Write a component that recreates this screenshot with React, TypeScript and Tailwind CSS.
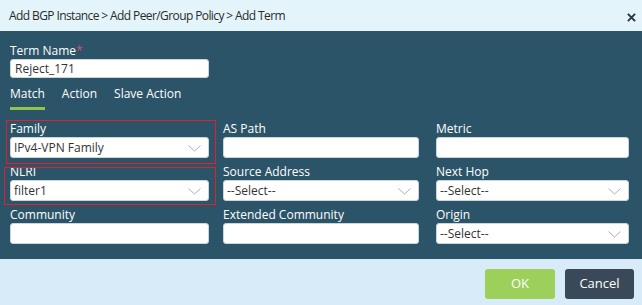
import React from 'react';

const font = { fontFamily: '"Open Sans", "Liberation Sans", sans-serif' };

const Chevron = () => (
  <svg width="13" height="7" viewBox="0 0 13 7" className="absolute right-[7px] top-[7px]">
    <path d="M0.5 0.5 L6.5 6 L12.5 0.5" fill="none" stroke="#a9b1b8" strokeWidth="1" />
  </svg>
);

interface FieldProps {
  label: string;
  value?: string;
  select?: boolean;
  highlight?: 'family' | 'nlri';
}

const Field: React.FC<FieldProps> = ({ label, value, select, highlight }) => (
  <div className="relative flex flex-col">
    <div className="h-[17px] leading-[17px] text-[12px] text-white">{label}</div>
    <div className="relative h-[21px] bg-white rounded-[3px] border border-[#c9d6de] flex items-center pl-[3px] text-[12px] text-[#333]">
      {value}
      {select && <Chevron />}
    </div>
    {highlight === 'family' && (
      <div className="absolute z-10 pointer-events-none left-[-4px] top-0 w-[210px] h-[44px] border border-solid border-[#e0202c]" />
    )}
    {highlight === 'nlri' && (
      <div className="absolute z-10 pointer-events-none left-[-6px] top-[4px] w-[212px] h-[38px] border border-solid border-[#e0202c]" />
    )}
  </div>
);

export default function App() {
  return (
    <div className="w-[642px] h-[305px] flex flex-col bg-[#d7ecf8]" style={font}>
      <div className="h-[31px] shrink-0 bg-[#e4f4fb] flex items-center justify-between pl-[9px] pr-[6px]">
        <span className="text-[12px] text-[#2a2a2a] tracking-[-0.6px]">
          Add BGP Instance &gt; Add Peer/Group Policy &gt; Add Term
        </span>
        <svg width="9" height="9" viewBox="0 0 10 10" className="mt-[3px]">
          <path d="M1 1 L9 9 M9 1 L1 9" stroke="#2b3540" strokeWidth="2.2" />
        </svg>
      </div>

      <div className="h-[228px] shrink-0 bg-[#2b5469] px-[10px] pt-[11px]">
        <div className="h-[17px] leading-[17px] text-[12px] text-white">
          Term Name<span className="text-[#e0457b]">*</span>
        </div>
        <div className="w-[199px] h-[19px] bg-white rounded-[3px] border border-[#c9d6de] flex items-center pl-[4px] text-[12px] text-[#333]">
          Reject_171
        </div>

        <div className="flex gap-[17px] mt-[7px] h-[25px] text-[12px] text-white">
          <div className="flex flex-col">
            <span className="leading-[17px]">Match</span>
            <div className="mt-auto h-[3px] bg-[#8fc54a]" />
          </div>
          <span className="leading-[17px]">Action</span>
          <span className="leading-[17px]">Slave Action</span>
        </div>

        <div className="grid grid-cols-[199px_196px_196px] gap-x-[14px] gap-y-[5px] mt-[10px]">
          <Field label="Family" value="IPv4-VPN Family" select highlight="family" />
          <div><Field label="AS Path" /></div>
          <div className="ml-[3px]"><Field label="Metric" /></div>
          <Field label="NLRI" value="filter1" select highlight="nlri" />
          <div><Field label="Source Address" value="--Select--" select /></div>
          <div className="ml-[3px]"><Field label="Next Hop" value="--Select--" select /></div>
          <Field label="Community" />
          <div><Field label="Extended Community" /></div>
          <div className="ml-[3px]"><Field label="Origin" value="--Select--" select /></div>
        </div>
      </div>

      <div className="flex-1 flex items-start justify-end gap-[10px] pt-[10px] pr-[8px]">
        <button className="w-[70px] h-[30px] rounded-[3px] bg-[#9dcf5b] text-white text-[13px]">OK</button>
        <button className="w-[69px] h-[30px] rounded-[3px] bg-[#3a4959] text-white text-[13px]">Cancel</button>
      </div>
    </div>
  );
}
